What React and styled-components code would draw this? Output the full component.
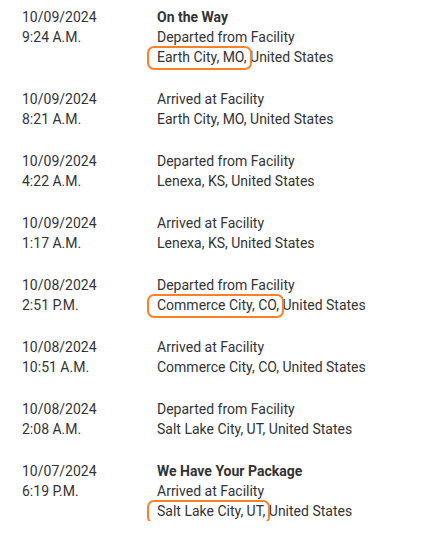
import React from 'react';
import styled, { createGlobalStyle } from 'styled-components';

const events = [
  { date: '10/09/2024', time: '9:24 A.M.', status: 'On the Way', desc: 'Departed from Facility', place: 'Earth City, MO,', country: 'United States', marked: true },
  { date: '10/09/2024', time: '8:21 A.M.', desc: 'Arrived at Facility', place: 'Earth City, MO,', country: 'United States' },
  { date: '10/09/2024', time: '4:22 A.M.', desc: 'Departed from Facility', place: 'Lenexa, KS,', country: 'United States' },
  { date: '10/09/2024', time: '1:17 A.M.', desc: 'Arrived at Facility', place: 'Lenexa, KS,', country: 'United States' },
  { date: '10/08/2024', time: '2:51 P.M.', desc: 'Departed from Facility', place: 'Commerce City, CO,', country: 'United States', marked: true },
  { date: '10/08/2024', time: '10:51 A.M.', desc: 'Arrived at Facility', place: 'Commerce City, CO,', country: 'United States' },
  { date: '10/08/2024', time: '2:08 A.M.', desc: 'Departed from Facility', place: 'Salt Lake City, UT,', country: 'United States' },
  { date: '10/07/2024', time: '6:19 P.M.', status: 'We Have Your Package', desc: 'Arrived at Facility', place: 'Salt Lake City, UT,', country: 'United States', marked: true },
];

export default function App() {
  return (
    <>
      <GlobalStyle />
      <History>
        {events.map((ev, i) => (
          <Event key={i}>
            <When>
              <div>{ev.date}</div>
              <div>{ev.time}</div>
            </When>
            <What>
              {ev.status && <Status>{ev.status}</Status>}
              <div>{ev.desc}</div>
              <div>
                <Place marked={ev.marked}>{ev.place}</Place> {ev.country}
              </div>
            </What>
          </Event>
        ))}
      </History>
    </>
  );
}

const GlobalStyle = createGlobalStyle`
  body {
    margin: 0;
    background: #fff;
    font-family: Roboto, 'Liberation Sans', sans-serif;
    font-size: 14px;
    color: #333;
  }
`;

const History = styled.div`
  padding: 7px 0 0 22px;
  display: flex;
  flex-direction: column;
  gap: 22px;
`;

const Event = styled.div`
  display: grid;
  grid-template-columns: 135px 1fr;
  line-height: 20px;
`;

const When = styled.div``;

const What = styled.div``;

const Status = styled.div`
  font-weight: 700;
  color: #333;
`;

const Place = styled.span.withConfig({ shouldForwardProp: p => p !== 'marked' })`
  position: relative;

  ${props => props.marked && `
    &::after {
      content: '';
      position: absolute;
      left: -10px;
      right: -5px;
      top: -3px;
      bottom: -5px;
      border: 2.5px solid #f7822a;
      border-radius: 7px;
    }
  `}
`;
